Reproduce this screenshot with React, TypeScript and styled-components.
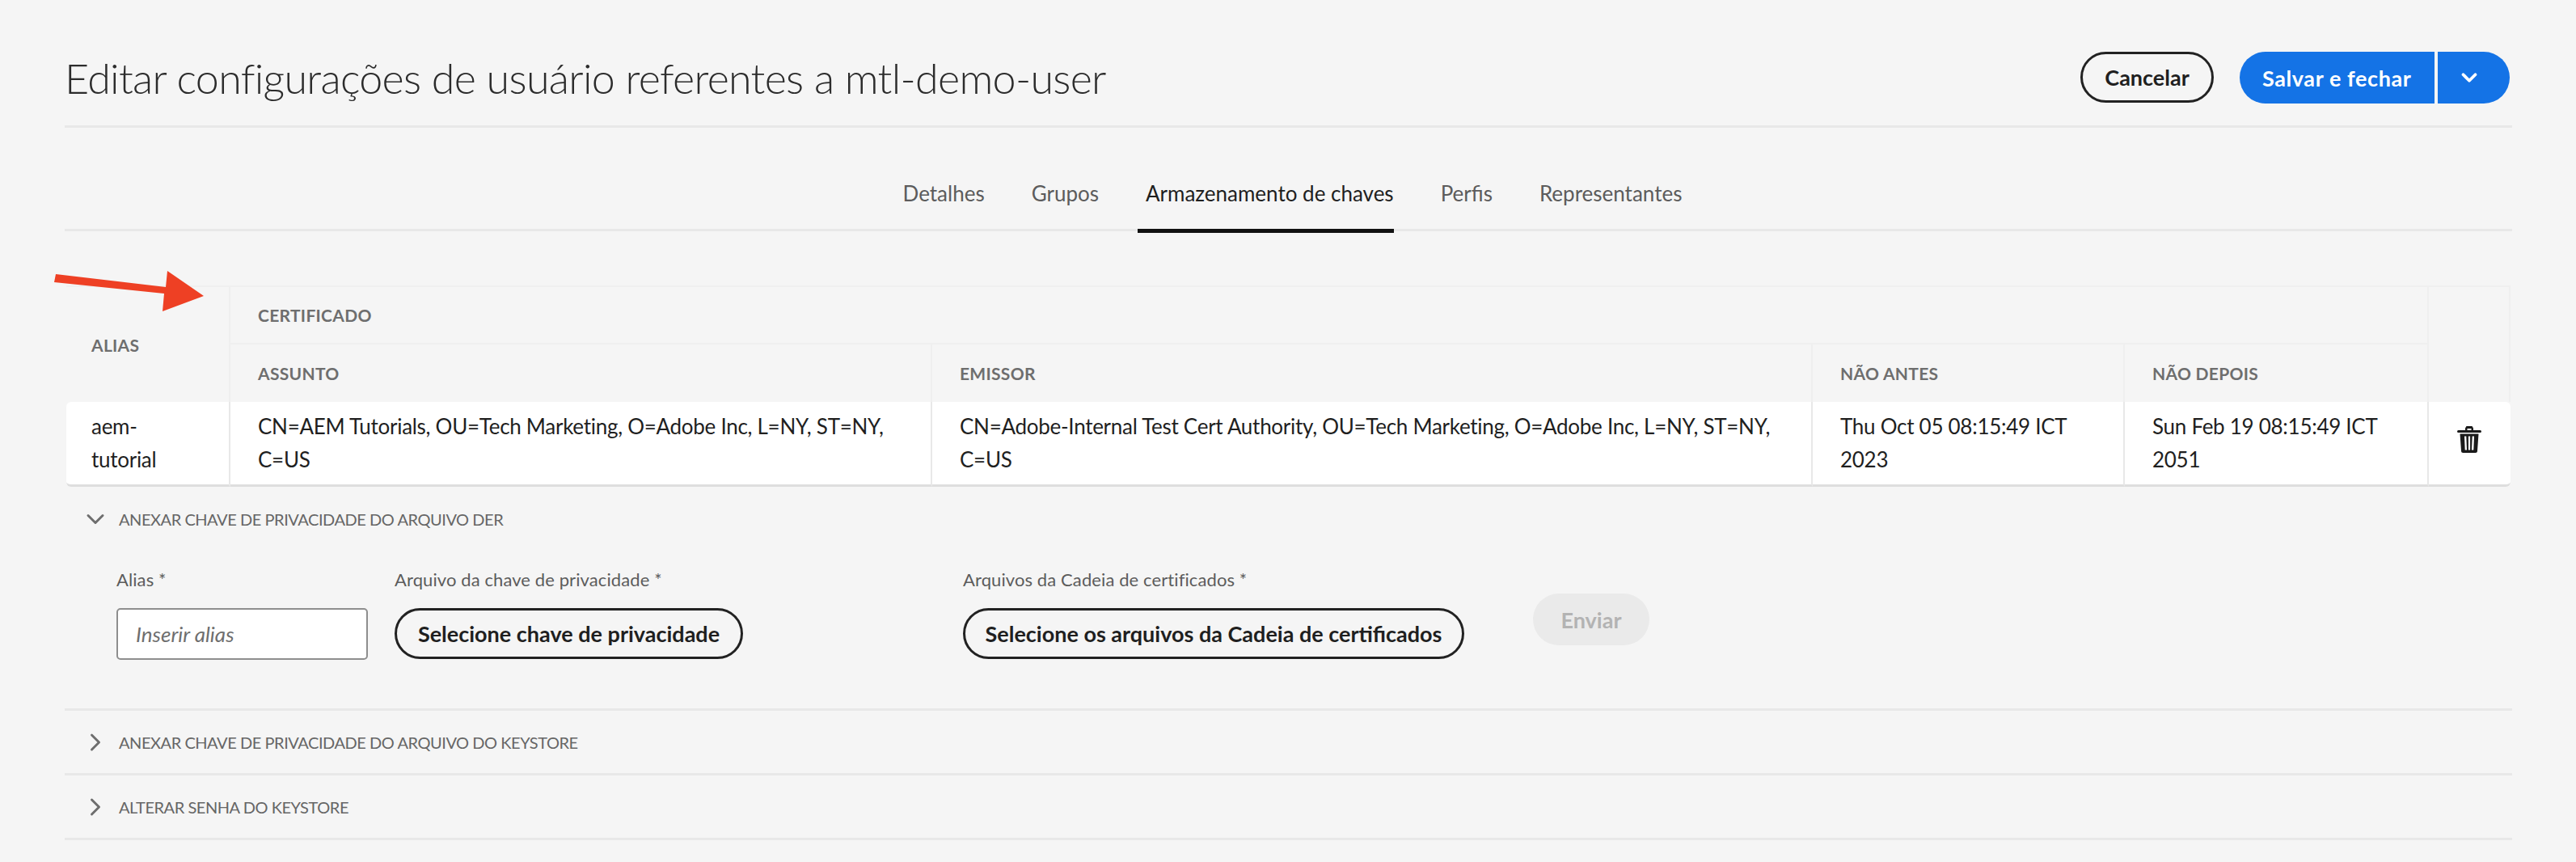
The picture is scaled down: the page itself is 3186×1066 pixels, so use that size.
import styled, { createGlobalStyle } from "styled-components";
import { ChevronDown, ChevronRight } from "lucide-react";

const GlobalStyle = createGlobalStyle`
    html, body {
        margin: 0;
        padding: 0;
        background: #f5f5f5;
    }
    body {
        font-family: Lato, "Open Sans", "Liberation Sans", sans-serif;
        color: #2c2c2c;
    }
`;

const Page = styled.div`
    position: relative;
    width: 3186px;
    height: 1066px;
    box-sizing: border-box;
    padding: 0 79px 0 80px;
    overflow: hidden;
`;

const Header = styled.header`
    display: flex;
    align-items: flex-start;
    justify-content: space-between;
    height: 158px;
    box-sizing: border-box;
    padding-top: 64px;
    border-bottom: 3px solid #e8e8e8;
`;

const Title = styled.h1`
    margin: 0;
    font-size: 52px;
    font-weight: 300;
    line-height: 64px;
    letter-spacing: -0.7px;
    color: #2c2c2c;
`;

const Actions = styled.div`
    display: flex;
    margin-right: 3px;
    gap: 32px;
`;

const OutlineButton = styled.button<{ $w: number }>`
    display: block;
    box-sizing: border-box;
    width: ${(p) => p.$w}px;
    height: 63px;
    padding: 0;
    background: transparent;
    border: 3px solid #222222;
    border-radius: 32px;
    font-family: inherit;
    font-size: 27px;
    font-weight: 700;
    color: #1f1f1f;
    white-space: nowrap;
`;

const SplitButton = styled.div`
    display: flex;
    height: 64px;
    border-radius: 32px;
    overflow: hidden;
    background: #1473e6;
`;

const SaveLabel = styled.span`
    display: flex;
    align-items: center;
    width: 241px;
    box-sizing: border-box;
    padding-left: 28px;
    font-size: 27px;
    font-weight: 700;
    letter-spacing: 0.6px;
    color: #ffffff;
`;

const SaveCaret = styled.span`
    display: flex;
    align-items: center;
    justify-content: center;
    width: 93px;
    border-left: 4px solid #f5f5f5;
    box-sizing: border-box;
    padding-right: 12px;
    color: #ffffff;
`;

const Tabs = styled.nav`
    display: flex;
    justify-content: center;
    gap: 48px;
    height: 128px;
    box-sizing: border-box;
    border-bottom: 3px solid #e8e8e8;
`;

const Tab = styled.span<{ $active?: boolean }>`
    box-sizing: border-box;
    height: 130px;
    padding: 63px 0 0 10px;
    border-bottom: ${(p) => (p.$active ? "5px solid #111111" : "none")};
    font-size: 26px;
    line-height: 36px;
    color: ${(p) => (p.$active ? "#1f1f1f" : "#5c5c5c")};
`;

const KeyTable = styled.table`
    width: 3023px;
    margin: 67px 0 0 2px;
    border-collapse: separate;
    border-spacing: 0;
    table-layout: fixed;
`;

const HeadCell = styled.th`
    box-sizing: border-box;
    padding: 0 0 0 34px;
    background: #f5f5f5;
    border-right: 2px solid #efefef;
    border-top: 2px solid #efefef;
    font-size: 21px;
    font-weight: 700;
    letter-spacing: 0.3px;
    text-align: left;
    color: #6e6e6e;
    text-transform: uppercase;

    &:first-child[rowspan] {
        padding-left: 31px;
    }
`;

const GroupRow = styled.tr`
    height: 71px;
`;

const ColumnRow = styled.tr`
    height: 73px;
`;

const BodyCell = styled.td`
    box-sizing: border-box;
    height: 105px;
    padding: 0 20px 0 34px;
    background: #ffffff;
    border-right: 2px solid #e8e8e8;
    border-bottom: 3px solid #dedede;
    font-size: 26px;
    line-height: 41px;
    letter-spacing: -0.28px;
    color: #1f1f1f;

    &:first-child {
        padding: 0 40px 0 31px;
        border-top-left-radius: 6px;
        border-bottom-left-radius: 6px;
    }

    &:last-child {
        padding: 0 0 10px;
        border-right: none;
        border-top-right-radius: 6px;
        border-bottom-right-radius: 6px;
    }
`;

const TrashIcon = styled.svg`
    display: block;
    margin: 0 0 0 35px;
`;

const Section = styled.section`
    border-bottom: 3px solid #e8e8e8;
`;

const SectionHead = styled.div<{ $h: number }>`
    display: flex;
    align-items: center;
    height: ${(p) => p.$h}px;
    padding-left: 20px;
    color: #6e6e6e;

    svg {
        flex: none;
        width: 36px;
        height: 36px;
        margin-right: 11px;
        stroke-width: 2;
    }
`;

const SectionTitle = styled.span`
    font-size: 20px;
    letter-spacing: -0.45px;
    color: #666666;
`;

const Form = styled.div`
    display: flex;
    align-items: flex-start;
    padding: 18px 0 60px 64px;
`;

const Field = styled.div<{ $left?: number }>`
    display: flex;
    flex-direction: column;
    gap: 18px;
    margin-left: ${(p) => p.$left ?? 0}px;
`;

const Label = styled.label`
    font-size: 22px;
    line-height: 34px;
    letter-spacing: 0.1px;
    color: #5c5c5c;
    white-space: nowrap;
`;

const AliasInput = styled.input`
    box-sizing: border-box;
    width: 311px;
    height: 64px;
    padding: 0 22px;
    background: #ffffff;
    border: 2px solid #8e8e8e;
    border-radius: 5px;
    font-family: inherit;
    font-size: 26px;
    outline: none;

    &::placeholder {
        font-style: italic;
        color: #6e6e6e;
        opacity: 1;
    }
`;

const SendButton = styled.button`
    box-sizing: border-box;
    width: 144px;
    height: 64px;
    margin: 34px 0 0 85px;
    background: #eaeaea;
    border: none;
    border-radius: 32px;
    font-family: inherit;
    font-size: 27px;
    font-weight: 700;
    color: #b3b3b3;
`;

// seta vermelha colada por cima da captura
const Arrow = styled.svg`
    position: absolute;
    left: 60px;
    top: 325px;
`;

const App = () => {
    return (
        <Page>
            <GlobalStyle />
            <Header>
                <Title>Editar configurações de usuário referentes a mtl-demo-user</Title>
                <Actions>
                    <OutlineButton $w={165}>Cancelar</OutlineButton>
                    <SplitButton>
                        <SaveLabel>Salvar e fechar</SaveLabel>
                        <SaveCaret>
                            <ChevronDown size={30} strokeWidth={3} />
                        </SaveCaret>
                    </SplitButton>
                </Actions>
            </Header>
            <Tabs>
                <Tab>Detalhes</Tab>
                <Tab>Grupos</Tab>
                <Tab $active>Armazenamento de chaves</Tab>
                <Tab>Perfis</Tab>
                <Tab>Representantes</Tab>
            </Tabs>
            <KeyTable>
                <colgroup>
                    <col width={203} />
                    <col width={868} />
                    <col width={1089} />
                    <col width={386} />
                    <col width={376} />
                    <col width={101} />
                </colgroup>
                <thead>
                    <GroupRow>
                        <HeadCell rowSpan={2}>Alias</HeadCell>
                        <HeadCell colSpan={4}>Certificado</HeadCell>
                        <HeadCell rowSpan={2} />
                    </GroupRow>
                    <ColumnRow>
                        <HeadCell>Assunto</HeadCell>
                        <HeadCell>Emissor</HeadCell>
                        <HeadCell>Não antes</HeadCell>
                        <HeadCell>Não depois</HeadCell>
                    </ColumnRow>
                </thead>
                <tbody>
                    <tr>
                        <BodyCell>aem-tutorial</BodyCell>
                        <BodyCell>CN=AEM Tutorials, OU=Tech Marketing, O=Adobe Inc, L=NY, ST=NY, C=US</BodyCell>
                        <BodyCell>CN=Adobe-Internal Test Cert Authority, OU=Tech Marketing, O=Adobe Inc, L=NY, ST=NY, C=US</BodyCell>
                        <BodyCell>Thu Oct 05 08:15:49 ICT 2023</BodyCell>
                        <BodyCell>Sun Feb 19 08:15:49 ICT 2051</BodyCell>
                        <BodyCell>
                            <TrashIcon width="30" height="33" viewBox="0 0 30 33">
                                <path
                                    fillRule="evenodd"
                                    fill="#1a1a1a"
                                    d="M10 2.5 11.5 0h7L20 2.5V5h8.5a1.5 1.5 0 0 1 0 3h-27a1.5 1.5 0 0 1 0-3H10V2.5ZM12.5 3v2h5V3h-5ZM3.5 9.5h23L25 30.5a2.5 2.5 0 0 1-2.5 2.5h-15A2.5 2.5 0 0 1 5 30.5L3.5 9.5ZM9 12.5l.7 17h2.3l-.7-17H9Zm4.9 0v17h2.2v-17h-2.2Zm4.8 0-.7 17h2.3l.7-17h-2.3Z"
                                />
                            </TrashIcon>
                        </BodyCell>
                    </tr>
                </tbody>
            </KeyTable>
            <Section>
                <SectionHead $h={80}>
                    <ChevronDown />
                    <SectionTitle>ANEXAR CHAVE DE PRIVACIDADE DO ARQUIVO DER</SectionTitle>
                </SectionHead>
                <Form>
                    <Field>
                        <Label>Alias *</Label>
                        <AliasInput placeholder="Inserir alias" />
                    </Field>
                    <Field $left={33}>
                        <Label>Arquivo da chave de privacidade *</Label>
                        <OutlineButton $w={431}>Selecione chave de privacidade</OutlineButton>
                    </Field>
                    <Field $left={272}>
                        <Label>Arquivos da Cadeia de certificados *</Label>
                        <OutlineButton $w={620}>Selecione os arquivos da Cadeia de certificados</OutlineButton>
                    </Field>
                    <SendButton disabled>Enviar</SendButton>
                </Form>
            </Section>
            <Section>
                <SectionHead $h={77}>
                    <ChevronRight />
                    <SectionTitle>ANEXAR CHAVE DE PRIVACIDADE DO ARQUIVO DO KEYSTORE</SectionTitle>
                </SectionHead>
            </Section>
            <Section>
                <SectionHead $h={77}>
                    <ChevronRight />
                    <SectionTitle>ALTERAR SENHA DO KEYSTORE</SectionTitle>
                </SectionHead>
            </Section>
            <Arrow width="200" height="70" viewBox="0 0 200 70">
                <polygon fill="#ee4024" points="9,14 145,30 147,10 192,41 141,60 143,38 7,24" />
            </Arrow>
        </Page>
    );
};

export default App;
